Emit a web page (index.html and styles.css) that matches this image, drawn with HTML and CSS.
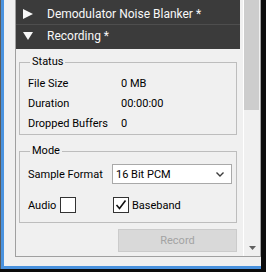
FILE: index.html
```html
<!DOCTYPE html>
<html>
<head>
  <title>Recording</title>
  <link rel="stylesheet" href="styles.css">
</head>
<body>
  <div class="window">
    <div class="scroll-area">
      <div class="viewport">
        <div class="section-header first">
          <svg class="toggle" width="10" height="10" viewBox="0 0 10 10"><path d="M0 0 L10 5 L0 10 Z"/></svg>
          <span>Demodulator Noise Blanker *</span>
        </div>
        <div class="section-header second">
          <svg class="toggle" width="10" height="10" viewBox="0 0 10 10"><path d="M0 1 L10 1 L5 9 Z"/></svg>
          <span>Recording *</span>
        </div>

        <div class="section-body">
          <fieldset class="group status">
            <legend>Status</legend>
            <div class="info-row"><span>File Size</span><span>0 MB</span></div>
            <div class="info-row"><span>Duration</span><span>00:00:00</span></div>
            <div class="info-row"><span>Dropped Buffers</span><span>0</span></div>
          </fieldset>

          <fieldset class="group mode">
            <legend>Mode</legend>
            <div class="form-grid">
              <span>Sample Format</span>
              <div class="combo">
                <span>16 Bit PCM</span>
                <svg width="8" height="5" viewBox="0 0 8 5"><path d="M0.5 0.5 L4 4 L7.5 0.5" fill="none" stroke="#3c3c3c" stroke-width="1.4"/></svg>
              </div>
              <div class="check-cell">
                <span>Audio</span>
                <span class="checkbox"></span>
              </div>
              <div class="check-cell">
                <span class="checkbox">
                  <svg width="14" height="14" viewBox="0 0 14 14"><path d="M2.5 7 L5.5 10.5 L11.5 2.5" fill="none" stroke="#111" stroke-width="1.6"/></svg>
                </span>
                <span>Baseband</span>
              </div>
            </div>
          </fieldset>

          <div class="actions">
            <button class="record-btn" disabled>Record</button>
          </div>
        </div>
      </div>

      <div class="scrollbar">
        <div class="thumb"></div>
        <div class="track"></div>
        <div class="arrow-btn">
          <svg width="7" height="4" viewBox="0 0 7 4"><path d="M0 0 L7 0 L3.5 4 Z"/></svg>
        </div>
      </div>
    </div>
  </div>
</body>
</html>
```

FILE: styles.css
```css
html, body {
  margin: 0;
  height: 100%;
}

body {
  background-color: #0c0c0c;
  font-family: Roboto, sans-serif;
  font-size: 11px;
  color: #000000;
}

/* Window frame */
.window {
  box-sizing: border-box;
  width: 260px;
  height: 269px;
  margin-left: 1px;
  padding: 0 0 9px 11px;
  background-color: #f0f0f0;
  border-left: 3px solid #4a92de;
  border-bottom: 3px solid #4a92de;
  box-shadow: -1px 0 0 #5a5a5a;
  display: flex;
}

.scroll-area {
  flex: 1;
  min-width: 0;
  display: flex;
  border: 1px solid #a0a0a0;
  border-top: none;
}

.viewport {
  flex: 1;
  min-width: 0;
  overflow: hidden;
}

/* Collapsible section headers */
.section-header {
  box-sizing: border-box;
  height: 24px;
  margin-right: 3px;
  background-color: #3b3b3b;
  color: #f8f8f8;
  font-size: 12px;
  display: flex;
  align-items: center;
  gap: 14px;
  padding-left: 7px;
}

.section-header.first {
  padding-top: 4px;
  border-bottom: 1px solid #4e4e4e;
  height: 25px;
}

.section-header.second {
  padding-bottom: 2px;
}

.toggle {
  fill: #f8f8f8;
  flex: none;
}

.section-body {
  padding: 0 6px 0 3px;
}

/* Group boxes */
.group {
  box-sizing: border-box;
  margin: 0;
  min-width: 0;
  border: 1px solid #bdbdbd;
  padding: 4px 8px 1px 8px;
}

.group legend {
  padding: 0 2px;
  margin-left: 2px;
  line-height: 14px;
}

.status {
  margin-top: 6px;
}

.mode {
  margin-top: 9px;
  padding-top: 6px;
  padding-bottom: 7px;
}

.info-row {
  display: grid;
  grid-template-columns: 93px 1fr;
  height: 20px;
  align-items: center;
}

.form-grid {
  display: grid;
  grid-template-columns: 84px 1fr;
  grid-auto-rows: 20px;
  row-gap: 11px;
  align-items: center;
}

.combo {
  box-sizing: border-box;
  width: 120px;
  height: 20px;
  background-color: #ffffff;
  border: 1px solid #a9a9a9;
  display: flex;
  align-items: center;
  justify-content: space-between;
  padding: 0 7px 0 3px;
}

.check-cell {
  display: flex;
  align-items: center;
  gap: 4px;
}

.check-cell .checkbox:first-child {
  margin-left: 1px;
  margin-right: -1px;
}

.checkbox {
  box-sizing: border-box;
  width: 16px;
  height: 16px;
  background-color: #ffffff;
  border: 1px solid #333333;
  display: flex;
}

/* Record button */
.actions {
  display: flex;
  justify-content: flex-end;
  margin-top: 6px;
}

.record-btn {
  width: 119px;
  height: 23px;
  font-family: Roboto, sans-serif;
  font-size: 11px;
  color: #a3a3a3;
  background-color: #d9d9d9;
  border: 1px solid #cbcbcb;
  padding: 0;
}

/* Scrollbar */
.scrollbar {
  width: 17px;
  flex: none;
  display: flex;
  flex-direction: column;
  background-color: #f0f0f0;
  box-shadow: inset 1px 0 0 #ffffff;
}

.thumb {
  height: 110px;
  margin: 0 1px;
  background-color: #cdcdcd;
}

.track {
  flex: 1;
}

.arrow-btn {
  height: 17px;
  display: flex;
  align-items: center;
  justify-content: center;
  fill: #606060;
  padding-left: 1px;
}
```
